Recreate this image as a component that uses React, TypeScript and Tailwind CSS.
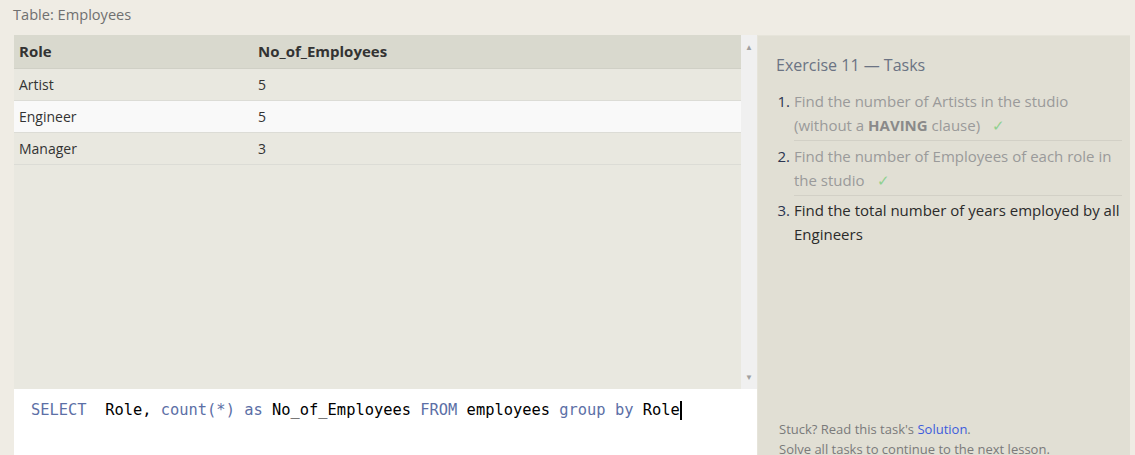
import React from "react";

const rows = [
  { role: "Artist", n: 5 },
  { role: "Engineer", n: 5, hi: true },
  { role: "Manager", n: 3 },
];

function Check() {
  return <span className="ml-3 text-[#8fd18f]">✓</span>;
}

export default function App() {
  return (
    <div
      className="w-[1135px] h-[455px] overflow-hidden bg-[#efece4] text-[#333]"
      style={{ fontFamily: '"Open Sans", "Noto Sans", sans-serif' }}
    >
      <div className="h-[35px] pl-[13px] pt-[4px] text-[14.6px] text-[#707070]">Table: Employees</div>
      <div className="flex h-[420px]">
        {/* left side: result table + editor */}
        <div className="ml-[14px] w-[743px] flex flex-col">
          <div className="flex h-[354px] bg-[#e9e8e0]">
            <div className="flex-1">
              <table className="w-full text-[14px] border-collapse">
                <thead>
                  <tr className="h-[33px] bg-[#d9d9ce] border-b border-[#d0d0c6] text-[15px]">
                    <th className="text-left font-bold pl-[5px] w-[244px]">Role</th>
                    <th className="text-left font-bold">No_of_Employees</th>
                  </tr>
                </thead>
                <tbody>
                  {rows.map((r) => (
                    <tr
                      key={r.role}
                      className={`h-[32px] border-b border-[#dcdcd6] ${r.hi ? "bg-[#f9f9f9]" : ""}`}
                    >
                      <td className="pl-[5px]">{r.role}</td>
                      <td>{r.n}</td>
                    </tr>
                  ))}
                </tbody>
              </table>
            </div>
            <div className="w-[16px] bg-[#f0f0f0] flex flex-col items-center justify-between py-[6px] text-[8px] text-[#a0a0a0]">
              <span>▲</span>
              <span>▼</span>
            </div>
          </div>
          <div className="flex-1 bg-white pl-[17px] pt-[10px]">
            <div
              className="text-[15.4px] text-black flex items-center"
              style={{ fontFamily: '"DejaVu Sans Mono", "Liberation Mono", monospace' }}
            >
              <span className="whitespace-pre">
                <span className="text-[#5c6fa6]">SELECT</span>{"  "}Role, <span className="text-[#5c6fa6]">count(*)</span>{" "}
                <span className="text-[#5c6fa6]">as</span> No_of_Employees <span className="text-[#5c6fa6]">FROM</span> employees{" "}
                <span className="text-[#5c6fa6]">group</span> <span className="text-[#5c6fa6]">by</span> Role
              </span>
              <span className="inline-block w-[2px] h-[19px] bg-black" />
            </div>
          </div>
        </div>

        {/* right side: tasks */}
        <div className="w-[373px] bg-[#e1dfd4] border-t border-l border-[#e6e4da] flex flex-col justify-between pl-[18px] pr-[8px]">
          <div>
            <div className="mt-[17px] text-[16px] text-[#6b7383]">Exercise 11 — Tasks</div>
            <ol className="mt-[12px] text-[15px] leading-[24px]">
              <li className="flex">
                <span className="w-[18px] shrink-0 text-right pr-[4px] text-[#2c3550]">1.</span>
                <div className="flex-1 border-b border-[#d2d0c6] pb-[3px] text-[#9a9a9a]">
                  Find the number of Artists in the studio (without a <b className="text-[#8a8a8a]">HAVING</b> clause)
                  <Check />
                </div>
              </li>
              <li className="flex mt-[3px]">
                <span className="w-[18px] shrink-0 text-right pr-[4px] text-[#2c3550]">2.</span>
                <div className="flex-1 border-b border-[#d2d0c6] pb-[3px] text-[#9a9a9a]">
                  Find the number of Employees of each role in the studio
                  <Check />
                </div>
              </li>
              <li className="flex mt-[2px]">
                <span className="w-[18px] shrink-0 text-right pr-[4px] text-[#2c3550]">3.</span>
                <div className="flex-1 text-[#2b2b2b]">Find the total number of years employed by all Engineers</div>
              </li>
            </ol>
          </div>
          <div className="pl-[3px] text-[13px] leading-[20px] text-[#7a7a7a] mb-[-4px]">
            <div>
              Stuck? Read this task's <span className="text-[#3d5bdc]">Solution</span>.
            </div>
            <div>Solve all tasks to continue to the next lesson.</div>
          </div>
        </div>
      </div>
    </div>
  );
}
